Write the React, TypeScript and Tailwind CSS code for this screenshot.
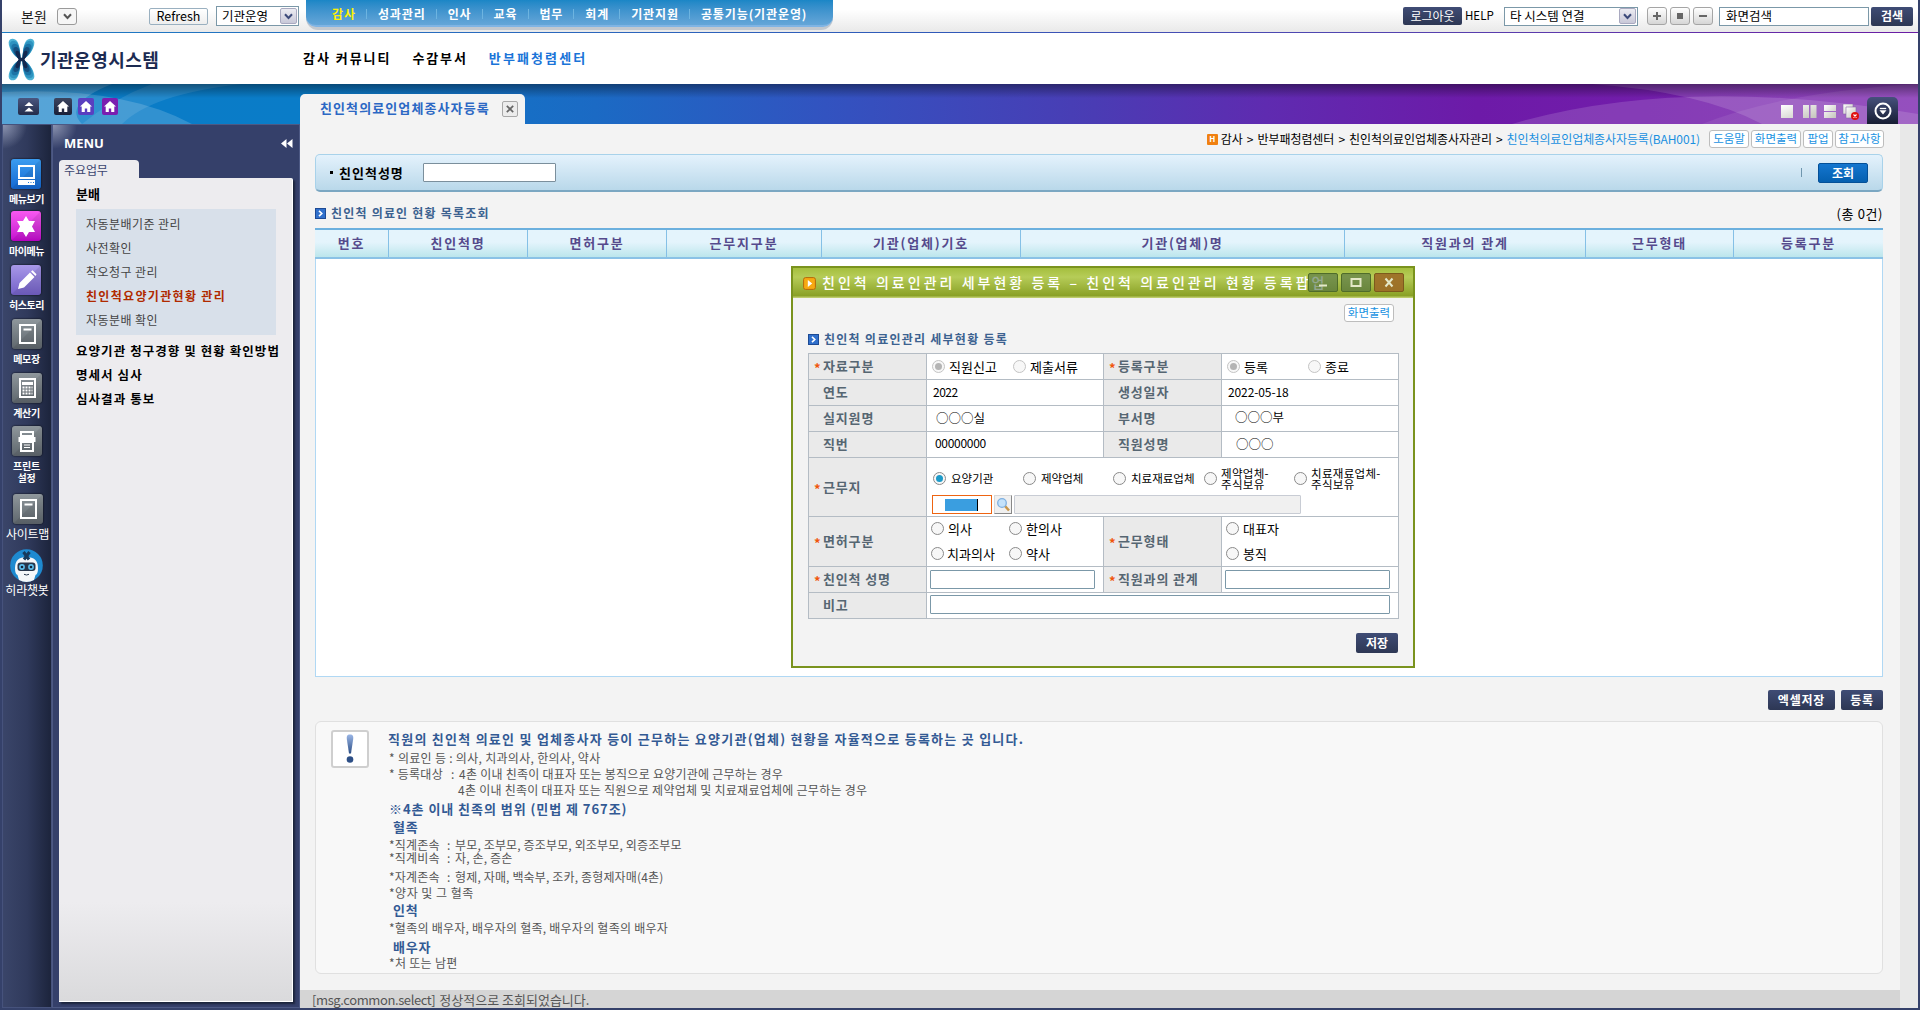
import React from 'react';

const cx = (...c: (string | false | undefined)[]) => c.filter(Boolean).join(' ');

/* ---------- small shared controls ---------- */

function Chevron({ color = '#3c4a7a' }: { color?: string }) {
  return (
    <svg width="9" height="7" viewBox="0 0 9 7" fill="none">
      <path d="M1 1.2 4.5 5 8 1.2" stroke={color} strokeWidth="2" />
    </svg>
  );
}

function SelectBox({ label, className }: { label: string; className: string }) {
  return (
    <div className={cx('flex items-center border border-[#7b98a8] bg-white pl-[5px] pr-px text-[12.5px] text-black', className)}>
      <span className="flex-1">{label}</span>
      <span className="flex h-4 w-[17px] items-center justify-center rounded-[2px] border border-[#a9a9c0] bg-gradient-to-b from-[#ececf2] to-[#c8c8d8]">
        <Chevron />
      </span>
    </div>
  );
}

function NavyButton({ children, className }: { children: React.ReactNode; className: string }) {
  return (
    <button className={cx('flex items-center justify-center rounded-[2px] bg-gradient-to-b from-[#3f4c75] to-[#2d3754] text-[12px] text-white', className)}>
      {children}
    </button>
  );
}

function LinkButton({ children, className }: { children: React.ReactNode; className: string }) {
  return (
    <button className={cx('flex h-[18px] items-center justify-center rounded-[3px] border border-[#bdbdbd] bg-white text-[11.5px] text-[#1a93e2]', className)}>
      {children}
    </button>
  );
}

function Radio({ state = 'off' }: { state?: 'off' | 'on' | 'disabled' | 'disabledOn' }) {
  return (
    <span
      className={cx(
        'flex size-[13px] shrink-0 items-center justify-center rounded-full border bg-[#f7f7f7]',
        state.startsWith('disabled') ? 'border-[#c4c4c4]' : 'border-[#8a8a8a]',
      )}
    >
      {state === 'on' && <span className="size-[7px] rounded-full bg-[#1d9ac8]" />}
      {state === 'disabledOn' && <span className="size-[7px] rounded-full bg-[#b4b4b4]" />}
    </span>
  );
}

function RadioItem({ label, state, className, gap = 'gap-[4px]' }: { label: React.ReactNode; state?: 'off' | 'on' | 'disabled' | 'disabledOn'; className?: string; gap?: string }) {
  return (
    <label className={cx('flex items-center', gap, className)}>
      <Radio state={state} />
      <span>{label}</span>
    </label>
  );
}

function SectionIcon() {
  return (
    <svg width="11" height="11" viewBox="0 0 11 11">
      <rect x=".5" y=".5" width="10" height="10" fill="#3070cc" stroke="#1d4a94" />
      <path d="M4 2.8 6.8 5.5 4 8.2" fill="none" stroke="#fff" strokeWidth="1.6" />
    </svg>
  );
}

/* ---------- top bar ---------- */

const navItems = ['감사', '성과관리', '인사', '교육', '법무', '회계', '기관지원', '공통기능(기관운영)'];

function TopBar() {
  return (
    <div className="flex h-8 bg-gradient-to-b from-white from-30% to-[#e9e9e9]">
      <div className="flex h-8 w-[304px] items-center">
        <span className="ml-[19px] w-[36px] text-[14px] text-[#222]">본원</span>
        <span className="flex h-[17px] w-[20px] items-center justify-center rounded-[3px] border border-[#9a9a9a] bg-[#f6f6f6]">
          <Chevron color="#555" />
        </span>
        <button className="ml-[72px] flex h-[17px] w-[59px] items-center justify-center rounded-[2px] border border-[#9ab0c0] bg-gradient-to-b from-white to-[#eee] text-[12.5px]">
          Refresh
        </button>
        <SelectBox label="기관운영" className="ml-[8px] h-[20px] w-[83px]" />
      </div>
      <nav className="h-[30px] w-[527px] rounded-b-[12px] bg-[#c2c8cf] pb-[3px]">
        <div className="flex h-[27px] items-center rounded-b-[10px] border-b-2 border-[#7fb4e4] bg-gradient-to-b from-[#1a86c6] to-[#64a6d8] pl-[26px] pt-[3px] text-[12px] font-bold tracking-[0.9px] text-white">
          {navItems.map((n, i) => (
            <React.Fragment key={n}>
              {i > 0 && <span className="ml-[10.2px] mr-[10.8px] h-[10px] w-px bg-[#6db4e0]" />}
              <span className={i === 0 ? 'text-[#fff200]' : ''}>{n}</span>
            </React.Fragment>
          ))}
        </div>
      </nav>
      <div className="flex flex-1 items-center justify-end pr-[5px]">
        <NavyButton className="h-[18px] w-[59px]">로그아웃</NavyButton>
        <span className="ml-[3px] w-[39px] text-[11.5px] text-black">HELP</span>
        <SelectBox label="타 시스템 연결" className="h-[19px] w-[134px]" />
        <div className="ml-[9px] flex gap-[3px]">
          {['plus', 'square', 'minus'].map((k) => (
            <span key={k} className="flex h-[18px] w-[20px] items-center justify-center rounded-[3px] border border-[#a5a5a5] bg-gradient-to-b from-white to-[#d6d6d6]">
              <svg width="10" height="10" viewBox="0 0 10 10" fill="#666">
                {k === 'plus' && <path d="M4 1h2v3h3v2H6v3H4V6H1V4h3z" />}
                {k === 'square' && <path d="M2 2h6v6H2z" />}
                {k === 'minus' && <path d="M1 4h8v2H1z" />}
              </svg>
            </span>
          ))}
        </div>
        <div className="ml-[6px] flex h-[19px] w-[150px] items-center border border-[#7b98a8] bg-white pl-[6px] text-[12.5px]">화면검색</div>
        <NavyButton className="ml-[2px] h-[19px] w-[42px] font-bold">검색</NavyButton>
      </div>
    </div>
  );
}

const lobe = 'M0 0C-7-3-12.300-12-11.800-17.500C-11.300-21.800-5.500-22-3.200-18C-.6-13.500-.3-7 0 0z';

function Logo() {
  return (
    <svg width="27" height="43" viewBox="-13.5 -21.5 27 43">
      {[
        ['#4db2d4', 1],
        ['#2e93c0', 0.9],
        ['#1c74a6', 0.76],
        ['#17507f', 0.6],
        ['#13284f', 0.42],
      ].map(([fill, s]) => (
        <g key={fill} fill={fill as string}>
          {[
            [1, 1],
            [-1, 1],
            [1, -1],
            [-1, -1],
          ].map(([a, b]) => (
            <path key={`${a}${b}`} d={lobe} transform={`translate(${-a} 0) scale(${a * Number(s)} ${b * Number(s)})`} />
          ))}
        </g>
      ))}
      <path d="M-4.500-3Q0-.5 4.500-3L3 0 4.500 3Q0 .5-4.500 3L-3 0z" fill="#13284f" />
    </svg>
  );
}

function Header() {
  return (
    <div className="flex h-[51px] items-center bg-white">
      <div className="ml-[6px] flex w-[295px] items-center gap-[5px] pt-px">
        <Logo />
        <span className="text-[18px] font-bold tracking-[0.5px] text-[#1c2b52]">기관운영시스템</span>
      </div>
      <div className="flex items-center gap-[21px] pb-[3px] text-[13px] font-bold text-black">
        <span className="tracking-[1.95px]">감사 커뮤니티</span>
        <span className="tracking-[1.9px]">수감부서</span>
        <span className="tracking-[2.1px] text-[#1a74d8]">반부패청렴센터</span>
      </div>
    </div>
  );
}

function HomeButton({ className }: { className: string }) {
  return (
    <span className={cx('flex h-[17px] items-center justify-center rounded-[2px]', className)}>
      <svg width="12" height="11" viewBox="0 0 12 11" fill="#fff">
        <path d="M6 0 12 5.500H10.300V11H7.200V7.500H4.800V11H1.700V5.500H0z" />
      </svg>
    </span>
  );
}

function Band() {
  return (
    <div className="relative flex h-10 bg-[linear-gradient(90deg,#0a7cc6_0%,#0a7cc8_16%,#1b6ac4_31%,#3253c0_43%,#4a3cb4_57%,#5f2bb0_66%,#6d1aa8_77%,#7a22ae_100%)]">
      <svg className="absolute inset-0" width="1916" height="40" viewBox="0 0 1916 40">
        <path d="M0 8Q120 2 190 40H0z" fill="#fff" opacity=".16" />
        <path d="M0 0V40H80Q60 20 110 0z" fill="#fff" opacity=".18" />
        <path d="M120 40Q150 10 240 0H150Q110 15 80 40z" fill="#fff" opacity=".1" />
        <path d="M1510 40Q1680 -10 1916 30V40z" fill="#fff" opacity=".14" />
        <path d="M1590 0Q1700 8 1760 40H1916V0z" fill="#fff" opacity=".14" />
        <path d="M1700 40Q1780 8 1916 0V40z" fill="#fff" opacity=".08" />
      </svg>
      <div className="absolute inset-x-0 top-0 h-[14px] bg-gradient-to-b from-black/40 to-transparent" />
      <div className="relative flex w-[298px] pl-4 pt-[14px]">
        <span className="flex h-[17px] w-[21px] items-center justify-center rounded-[2px] bg-gradient-to-b from-[#4a5680] to-[#232c4a]">
          <svg width="10" height="10" viewBox="0 0 10 10" fill="#fff">
            <path d="M5 0 9.500 4H.5zM5 5.500 9.500 9.500H.5z" />
          </svg>
        </span>
        <HomeButton className="ml-[15px] w-[18px] bg-gradient-to-b from-[#3c4560] to-[#1a2038]" />
        <HomeButton className="ml-[6px] w-[16px] bg-[#5a3fc0]" />
        <HomeButton className="ml-[8px] w-[16px] bg-[#7a1fb0]" />
      </div>
      <div className="relative mt-[10px] flex h-[30px] w-[225px] items-center rounded-t-[5px] bg-[#f3f3f3] pl-[20px]">
        <span className="w-[182px] pb-[3px] text-[13px] font-bold tracking-[1.1px] text-[#2c68c4]">친인척의료인업체종사자등록</span>
        <span className="flex size-4 items-center justify-center rounded-[2px] border border-[#a8a8a8] bg-[#ececec]">
          <svg width="8" height="8" viewBox="0 0 8 8">
            <path d="M.8.8 7.200 7.200M7.200.8.8 7.200" stroke="#666" strokeWidth="1.700" />
          </svg>
        </span>
      </div>
      <div className="relative ml-auto mr-[20px] flex items-end">
        <svg className="mb-[4px] mr-[7px]" width="80" height="16" viewBox="0 0 80 16">
          <defs>
            <linearGradient id="pane" x1="0" y1="0" x2="1" y2="1">
              <stop offset="0" stopColor="#fff" />
              <stop offset="1" stopColor="#c4c4bc" />
            </linearGradient>
          </defs>
          <g fill="url(#pane)">
            <path d="M1 1h12v13H1zM23 1h6v13h-6zM30.500 1h6v13h-6z" />
            <path d="M44 1h12v6H44zM44 8h12v6H44z" />
            <path d="M63 0h10v10H63z" stroke="#8a6aa8" strokeWidth=".6" />
            <path d="M66 3h10v11H66z" stroke="#8a6aa8" strokeWidth=".6" />
          </g>
          <circle cx="75" cy="12" r="4" fill="#e01010" />
          <path d="m73.500 10.500 3 3m0-3-3 3" stroke="#fff" strokeWidth="1.100" />
        </svg>
        <span className="flex h-[27px] w-[31px] items-center justify-center rounded-t-[5px] bg-gradient-to-b from-[#46517c] to-[#171e34]">
          <svg width="18" height="18" viewBox="0 0 18 18" fill="none">
            <circle cx="9" cy="9" r="7.500" stroke="#fff" strokeWidth="2" />
            <path d="M5.800 6.500h6.400" stroke="#fff" strokeWidth="1.300" />
            <path d="M5.500 8.300h7L9 12.500z" fill="#fff" />
          </svg>
        </span>
      </div>
    </div>
  );
}

/* ---------- left rail ---------- */

const gray = 'bg-gradient-to-b from-[#8f979c] to-[#5f676d]';

function RailIcon({ kind }: { kind: string }) {
  return (
    <svg width="30" height="30" viewBox="0 0 30 30" fill="none" stroke="#fff" strokeWidth="2">
      <path d="M30 0V30H0z" fill="#000" opacity=".08" stroke="none" />
      {kind === 'pc' && (
        <>
          <path d="M8 7h15v12H8z" />
          <path d="M7 21h17v5H7z" fill="#fff" stroke="none" />
          <path d="M17 23.500h1m1.500 0h1m1.500 0h1" stroke="#1a78d8" strokeWidth="1.200" />
        </>
      )}
      {kind === 'star' && <path d="m15 5 3 5h6l-3 5.500L24 21h-6l-3 5-3-5H6l3-5.500L6 10h6z" fill="#fff" stroke="none" />}
      {kind === 'pencil' && (
        <path d="m7 24 1.500-6L19 7.500l4.500 4.500L13 22.500zM20 6.500l1.500-1.300 4 4L24.500 11z" fill="#fff" stroke="none" />
      )}
      {kind === 'memo' && (
        <>
          <path d="M8 6h15v18H8z" />
          <path d="M11.500 10.500h8" />
        </>
      )}
      {kind === 'calc' && (
        <>
          <path d="M8 6h15v18H8z" />
          <path d="M10 9h11v3H10z" fill="#fff" stroke="none" />
          <path d="M10.500 14.500h10M10.500 17.500h10M10.500 20.500h10" strokeDasharray="2 1" />
        </>
      )}
      {kind === 'print' && (
        <>
          <path d="M9 6h12v4H9zM9 16h12v9H9z" />
          <path d="M6.500 11h17v5h-17z" fill="#fff" stroke="none" />
          <path d="M12 19h6M12 21.500h6" strokeWidth="1" />
        </>
      )}
    </svg>
  );
}

function Robot() {
  return (
    <svg className="shrink-0" width="33" height="33" viewBox="0 0 33 33">
      <circle cx="16.500" cy="16.500" r="16.300" fill="#1e8ad0" />
      <path d="M5 19Q5 8 16.500 8T28 19Q28 25 25.500 26L24 31Q16.500 35 9 31L7.500 26Q5 25 5 19z" fill="#f5f7f9" />
      <path d="M13.500 3 19 10.500M19.500 3 14 10.500" stroke="#173a5c" strokeWidth="3" />
      <rect x="7.500" y="13.500" width="18" height="8.500" rx="3" fill="#28374c" />
      <circle cx="12" cy="18" r="2.900" fill="#5ec0ee" />
      <circle cx="21" cy="18" r="2.900" fill="#5ec0ee" />
      <circle cx="12" cy="18" r="1.300" fill="#12243a" />
      <circle cx="21" cy="18" r="1.300" fill="#12243a" />
      <path d="M14 25.300q2.500 1.400 5 0" stroke="#28374c" fill="none" />
    </svg>
  );
}

const rail = [
  { kind: 'pc', label: '메뉴보기', bg: 'bg-gradient-to-b from-[#3b9cf0] to-[#1468d2]', h: 'h-[52px]' },
  { kind: 'star', label: '마이메뉴', bg: 'bg-gradient-to-b from-[#f858f0] to-[#c400d0]', h: 'h-[54px]' },
  { kind: 'pencil', label: '히스토리', bg: 'bg-gradient-to-b from-[#a898e8] to-[#7460c8]', h: 'h-[54px]' },
  { kind: 'memo', label: '메모장', bg: gray, h: 'h-[54px]' },
  { kind: 'calc', label: '계산기', bg: gray, h: 'h-[53px]' },
];

function Tile({ kind, bg }: { kind: string; bg: string }) {
  return (
    <span className={cx('size-[30px] shrink-0 overflow-hidden rounded-[3px] shadow-[0_0_2px_#000]', bg)}>
      <RailIcon kind={kind} />
    </span>
  );
}

function Rail() {
  return (
    <div className="flex w-[50px] shrink-0 flex-col items-center border border-[#46527c] bg-[radial-gradient(circle_at_0_0,#8c94b0_0,transparent_24px),linear-gradient(90deg,#3a4569,#303a5c_50%,#1c243c)] pr-px pt-[34px] text-white">
      {rail.map((r) => (
        <div key={r.kind} className={cx('flex shrink-0 flex-col items-center', r.h)}>
          <Tile kind={r.kind} bg={r.bg} />
          <span className="mt-[4px] h-3 whitespace-nowrap text-[10px] font-bold leading-3 tracking-[-0.4px]">{r.label}</span>
        </div>
      ))}
      <div className="flex h-[68px] shrink-0 flex-col items-center">
        <Tile kind="print" bg={gray} />
        <span className="mt-[4px] text-center text-[10px] font-bold leading-3 tracking-[-0.2px]">
          프린트
          <br />
          설정
        </span>
      </div>
      <div className="ml-[2px] flex h-[55px] shrink-0 flex-col items-center">
        <Tile kind="memo" bg={gray} />
        <span className="mt-[3px] whitespace-nowrap text-[12px] leading-[14px] tracking-[-0.3px]">사이트맵</span>
      </div>
      <Robot />
      <span className="ml-px whitespace-nowrap text-[12px] leading-[16px] tracking-[-0.2px]">히라챗봇</span>
    </div>
  );
}

const subMenu = ['자동분배기준 관리', '사전확인', '착오청구 관리', '친인척요양기관현황 관리', '자동분배 확인'];

function Menu() {
  return (
    <div className="flex w-[248px] shrink-0 flex-col border border-[#4d5984] bg-[#35406a] bg-[radial-gradient(circle_at_0_0,#8c94b0_0,#35406a_24px)] pb-[5px] pl-[6px] pr-[7px]">
      <div className="flex h-[35px] items-center justify-between pl-[5px] pt-[2px]">
        <span className="font-['Open_Sans'] text-[13px] font-bold text-white">MENU</span>
        <svg className="-mr-px" width="12" height="9" viewBox="0 0 12 9" fill="#fff">
          <path d="M5.500 0v9L0 4.500zM11.500 0v9L6 4.500z" />
        </svg>
      </div>
      <div className="flex h-[18px] w-[80px] items-center rounded-t-[4px] bg-[#edecef] pl-[5px] pt-[2px] text-[12px] tracking-[-0.1px] text-[#3c4670]">주요업무</div>
      <div className="w-[234px] flex-1 rounded-tr-[2px] border-b border-r border-white bg-[linear-gradient(#edecef_0%,#edecef_88%,#dadadc_100%)] pl-[17px] pt-[5px] shadow-[2px_2px_2px_#1c243c]">
        <div className="flex h-[20px] items-center text-[13px] font-bold text-black">분배</div>
        <div className="mt-[6px] flex h-[126px] w-[200px] flex-col justify-center bg-[#d8e0ea] pl-[11px]">
          {subMenu.map((s, i) => (
            <div
              key={s}
              className={cx('-ml-px flex h-6 items-center whitespace-nowrap text-[12px]', i === 3 ? 'font-bold tracking-[1.32px] text-[#b02a00]' : 'tracking-[0.45px] text-[#444]')}
            >
              {s}
            </div>
          ))}
        </div>
        <div className="mt-[4px] whitespace-nowrap text-[12.5px] font-bold tracking-[1.06px] text-black">
          <div className="flex h-6 items-center">요양기관 청구경향 및 현황 확인방법</div>
          <div className="flex h-6 items-center">명세서 심사</div>
          <div className="flex h-6 items-center">심사결과 통보</div>
        </div>
      </div>
    </div>
  );
}

/* ---------- popup ---------- */

function Label({ children, required }: { children: React.ReactNode; required?: boolean }) {
  return (
    <div className="flex items-center bg-[#eaeaea] pb-[2px] pl-[5px] text-[13px] font-bold tracking-[0.85px] text-[#566672]">
      <span className="w-[9px] pt-[4px] text-[13px] leading-none text-[#f0560a]">{required && '*'}</span>
      {children}
    </div>
  );
}

const field = 'h-[19px] rounded-[1px] border border-[#7b98a8] bg-white';

function Popup() {
  return (
    <div className="absolute left-[475px] top-[7px] flex h-[402px] w-[624px] flex-col border-2 border-[#7a931e] bg-[#f3f3f3]">
      <div className="relative flex h-[30px] items-center bg-[linear-gradient(#a5bf3e,#b6cc58_30%,#8aa126_92%,#c9d67c)] pl-[10px]">
        <svg width="13" height="13" viewBox="0 0 13 13">
          <rect x=".6" y=".6" width="11.800" height="11.800" rx="2" fill="#f7a912" stroke="#b4680a" />
          <path d="M4.800 3 9.200 6.500 4.800 10z" fill="#fff" />
        </svg>
        <span className="ml-[6px] whitespace-nowrap pb-[2px] text-[14px] font-medium tracking-[3.03px] text-white">
          친인척 의료인관리 세부현황 등록 – 친인척 의료인관리 현황 등록팝업
        </span>
        <div className="absolute right-[9px] top-[5px] flex gap-[3px]">
          {['min', 'max', 'close'].map((k) => (
            <span
              key={k}
              className={cx(
                'flex h-[19px] w-[30px] items-center justify-center rounded-[2px] border',
                k === 'close' ? 'border-[#7c5a1c] bg-[#9c6a26]/90' : 'border-[#4f6c2a] bg-[#4d6c44]/60',
              )}
            >
              <svg width="12" height="11" viewBox="0 0 12 11" fill="none" stroke="#e4e8c8">
                {k === 'min' && <path d="M2 8.500h8" strokeWidth="2" />}
                {k === 'max' && <path d="M1.500 2h9v7h-9z" strokeWidth="2" />}
                {k === 'close' && <path d="m2.500 1.500 7 8m0-8-7 8" strokeWidth="2" />}
              </svg>
            </span>
          ))}
        </div>
      </div>
      <div className="mt-[6px] flex h-[18px] justify-end pr-[19px]">
        <LinkButton className="w-[50px]">화면출력</LinkButton>
      </div>
      <div className="mt-[10px] flex h-[14px] items-center gap-[5px] pl-[15px]">
        <SectionIcon />
        <span className="text-[12px] font-bold tracking-[1.25px] text-[#3c6290]">친인척 의료인관리 세부현황 등록</span>
      </div>
      <div className="ml-[15px] mt-[7px] grid w-[591px] grid-cols-[117px_176px_117px_176px] grid-rows-[25px_25px_25px_25px_58px_49px_25px_25px] gap-px bg-[#b4bcc4] p-px text-[12px] text-black [&>*]:min-w-0">
        <Label required>자료구분</Label>
        <div className="flex items-center bg-white pl-[5px] text-[13px]">
          <RadioItem label="직원신고" state="disabledOn" className="w-[81px]" />
          <RadioItem label="제출서류" state="disabled" />
        </div>
        <Label required>등록구분</Label>
        <div className="flex items-center bg-white pl-[5px] text-[13px]">
          <RadioItem label="등록" state="disabledOn" className="w-[81px]" />
          <RadioItem label="종료" state="disabled" />
        </div>

        <Label>연도</Label>
        <div className="flex items-center bg-white pb-px pl-[6px] tracking-[-0.5px]">2022</div>
        <Label>생성일자</Label>
        <div className="flex items-center bg-white pb-px pl-[6px] tracking-[-0.1px]">2022-05-18</div>

        <Label>실지원명</Label>
        <div className="flex items-center bg-white pl-[9px] text-[12.5px]">○○○실</div>
        <Label>부서명</Label>
        <div className="flex items-center bg-white pb-[2px] pl-[13px] text-[12.5px]">○○○부</div>

        <Label>직번</Label>
        <div className="flex items-center bg-white pb-[3px] pl-[8px] tracking-[-0.3px]">00000000</div>
        <Label>직원성명</Label>
        <div className="flex items-center bg-white pl-[14px] text-[12.5px]">○○○</div>

        <Label required>근무지</Label>
        <div className="col-span-3 flex flex-col bg-white pl-[6px]">
          <div className="flex h-[37px] items-center pt-[4px] text-[11.5px] leading-[11px]">
            <RadioItem label="요양기관" state="on" className="w-[90px]" gap="gap-[5px]" />
            <RadioItem label="제약업체" className="w-[90px]" gap="gap-[5px]" />
            <RadioItem label="치료재료업체" className="w-[91px]" gap="gap-[5px]" />
            <RadioItem label={<>제약업체-<br />주식보유</>} className="w-[90px] tracking-[0.3px]" gap="gap-[4px]" />
            <RadioItem label={<>치료재료업체-<br />주식보유</>} className="tracking-[0.3px]" gap="gap-[4px]" />
          </div>
          <div className="-ml-px flex items-center">
            <div className="flex h-[19px] w-[60px] items-center border-[1.5px] border-[#ee6412] bg-white pl-[12px]">
              <span className="h-[12px] w-[33px] border-r border-black bg-[#3a9ee0]" />
            </div>
            <span className="ml-[2px] flex h-[19px] w-[18px] items-center justify-center border border-[#d8d8d8] border-b-[#888] border-r-[#888] bg-[#f0f0f0]">
              <svg width="15" height="15" viewBox="0 0 15 15">
                <path d="m9 9 4 4.500" stroke="#c8964a" strokeWidth="2.500" />
                <circle cx="6" cy="6" r="4.300" fill="#c4e2fa" stroke="#7fb0e0" strokeWidth="1.300" />
              </svg>
            </span>
            <div className="ml-[2px] h-[19px] w-[287px] rounded-[1px] border border-[#c8ccd4] bg-[#f0f0f0]" />
          </div>
        </div>

        <Label required>면허구분</Label>
        <div className="grid grid-cols-[78px_1fr] grid-rows-[24px_25px] bg-white pl-[4px] text-[13px]">
          <RadioItem label="의사" className="pb-px" />
          <RadioItem label="한의사" className="pb-px" />
          <RadioItem label="치과의사" gap="gap-[3px]" />
          <RadioItem label="약사" />
        </div>
        <Label required>근무형태</Label>
        <div className="grid grid-rows-[24px_25px] bg-white pl-[4px] text-[13px]">
          <RadioItem label="대표자" className="pb-px" />
          <RadioItem label="봉직" />
        </div>

        <Label required>친인척 성명</Label>
        <div className="flex items-center bg-white pl-[3px]">
          <div className={cx(field, 'w-[165px]')} />
        </div>
        <Label required>직원과의 관계</Label>
        <div className="flex items-center bg-white pl-[3px]">
          <div className={cx(field, 'w-[165px]')} />
        </div>

        <Label>비고</Label>
        <div className="col-span-3 flex items-center bg-white pb-[2px] pl-[3px]">
          <div className={cx(field, 'w-[460px]')} />
        </div>
      </div>
      <div className="mt-[14px] flex justify-end pr-[15px]">
        <NavyButton className="h-5 w-[42px] font-bold">저장</NavyButton>
      </div>
    </div>
  );
}

/* ---------- main content ---------- */

const columns = ['번호', '친인척명', '면허구분', '근무지구분', '기관(업체)기호', '기관(업체)명', '직원과의 관계', '근무형태', '등록구분'];

const heading = 'text-[13px] font-bold text-[#335a94]';

function Relation({ name, list, className }: { name: string; list: string; className: string }) {
  return (
    <div className={cx('flex', className)}>
      <span className="w-[58px] tracking-[0.2px]">{name}</span>
      <span className="w-[8px]">:</span>
      <span className="tracking-[0.15px]">{list}</span>
    </div>
  );
}

function Info() {
  return (
    <div className="mt-[11px] flex h-[253px] rounded-[6px] border border-[#e0e0e0] bg-[#f8f8f8] pl-[15px]">
      <div className="mt-[8px] flex size-[38px] shrink-0 items-center justify-center rounded-[3px] border-2 border-[#cfcfcf] bg-white">
        <svg width="10" height="30" viewBox="0 0 10 30">
          <defs>
            <linearGradient id="ex" x1="0" y1="0" x2="0" y2="1">
              <stop offset="0" stopColor="#9ab6e6" />
              <stop offset="1" stopColor="#2d4f86" />
            </linearGradient>
          </defs>
          <path d="M5 .5C8 .5 8.500 2.500 8.200 5L6 19.500H4L1.800 5C1.500 2.500 2 .5 5 .5z" fill="url(#ex)" />
          <circle cx="5" cy="25.500" r="3.300" fill="#2d4f86" />
        </svg>
      </div>
      <div className="ml-[20px] whitespace-pre pt-[10px] text-[12px] leading-[14px] text-[#555]">
        <div className={cx(heading, '-ml-px tracking-[1.25px]')}>직원의 친인척 의료인 및 업체종사자 등이 근무하는 요양기관(업체) 현황을 자율적으로 등록하는 곳 입니다.</div>
        <div className="mt-[5px] tracking-[0.3px]">* 의료인 등 : 의사, 치과의사, 한의사, 약사</div>
        <div className="mt-[2px] flex tracking-[0.25px]">
          <span className="w-[62px]">* 등록대상</span>
          <span className="w-[8px]">:</span>
          <span>4촌 이내 친족이 대표자 또는 봉직으로 요양기관에 근무하는 경우</span>
        </div>
        <div className="mt-[2px] pl-[69px] tracking-[0.26px]">4촌 이내 친족이 대표자 또는 직원으로 제약업체 및 치료재료업체에 근무하는 경우</div>
        <div className={cx(heading, 'mt-[5px] tracking-[0.95px]')}>※4촌 이내 친족의 범위 (민법 제 767조)</div>
        <div className={cx(heading, 'mt-[4px] pl-[4px] tracking-[0.8px]')}>혈족</div>
        <Relation className="mt-[4px]" name="*직계존속" list="부모, 조부모, 증조부모, 외조부모, 외증조부모" />
        <Relation className="-mt-px" name="*직계비속" list="자, 손, 증손" />
        <Relation className="mt-[5px]" name="*자계존속" list="형제, 자매, 백숙부, 조카, 종형제자매(4촌)" />
        <div className="mt-[2px] tracking-[0.5px]">*양자 및 그 혈족</div>
        <div className={cx(heading, 'mt-[3px] pl-[4px] tracking-[0.8px]')}>인척</div>
        <div className="mt-[4px] tracking-[0.25px]">*혈족의 배우자, 배우자의 혈족, 배우자의 혈족의 배우자</div>
        <div className={cx(heading, 'mt-[5px] pl-[4px] tracking-[0.8px]')}>배우자</div>
        <div className="mt-[2px] tracking-[0.3px]">*처 또는 남편</div>
      </div>
    </div>
  );
}

function Content() {
  return (
    <div className="flex w-[1600px] shrink-0 flex-col bg-[#f3f3f3]">
      <div className="flex h-[30px] items-center justify-end pr-[16px] text-[12px] text-black">
        <span className="mr-[3px] flex h-[11px] w-[11px] items-center justify-center rounded-[1px] bg-[#f08010] text-[8px] font-bold leading-none text-white">H</span>
        <span className="mr-[4px] tracking-[-0.05px] [word-spacing:1.4px]">감사 &gt; 반부패청렴센터 &gt; 친인척의료인업체종사자관리 &gt;</span>
        <span className="tracking-[-0.1px] text-[#1a90e0]">친인척의료인업체종사자등록(BAH001)</span>
        <LinkButton className="ml-[9px] w-[40px]">도움말</LinkButton>
        <LinkButton className="ml-[2px] w-[50px]">화면출력</LinkButton>
        <LinkButton className="ml-[2px] w-[30px]">팝업</LinkButton>
        <LinkButton className="ml-[2px] w-[49px]">참고사항</LinkButton>
      </div>
      <div className="ml-[15px] w-[1568px]">
        <div className="flex h-[38px] items-center rounded-[5px] border border-b-2 border-[#a8d2ea] border-b-[#7ba7c2] bg-gradient-to-b from-[#e4f2fc] to-[#b9d8ea] pl-[14px] pr-[14px]">
          <span className="mr-[6px] size-[3px] bg-black" />
          <span className="w-[84px] text-[13px] font-bold tracking-[1px] text-black">친인척성명</span>
          <div className="h-[19px] w-[133px] rounded-[1px] border border-[#7b8f9c] bg-white" />
          <span className="ml-auto h-[9px] w-px bg-[#6f96ae]" />
          <button className="ml-[16px] h-[20px] w-[50px] rounded-[2px] border border-[#045098] bg-gradient-to-b from-[#1476cf] to-[#0560b0] text-[12px] font-bold leading-none text-white">
            조회
          </button>
        </div>
        <div className="flex h-[36px] items-center pt-[6px]">
          <SectionIcon />
          <span className="ml-[5px] text-[12px] font-bold tracking-[1.2px] text-[#3c6290]">친인척 의료인 현황 목록조회</span>
          <span className="ml-auto pt-px text-[13px] tracking-[0.6px] text-black">(총 0건)</span>
        </div>
        <div className="grid h-[31px] grid-cols-[73px_139px_139px_155px_199px_324px_241px_148px_150px] border-b-2 border-t-2 border-b-[#8bc2e6] border-t-[#6cb0de] bg-gradient-to-b from-[#e4f4fc] from-45% to-[#bce6ec] text-[13px] font-bold tracking-[1.8px] text-[#554a8c]">
          {columns.map((c, i) => (
            <div key={c} className={cx('flex items-center justify-center pb-[3px]', i > 0 && 'border-l border-[#85c0e6]')}>
              {c}
            </div>
          ))}
        </div>
        <div className="relative h-[418px] border border-t-0 border-[#b0d8f4] bg-white">
          <Popup />
        </div>
        <div className="mt-[13px] flex justify-end gap-[6px]">
          <NavyButton className="h-5 w-[67px] font-bold tracking-[0.8px]">엑셀저장</NavyButton>
          <NavyButton className="h-5 w-[42px] font-bold tracking-[0.8px]">등록</NavyButton>
        </div>
        <Info />
      </div>
      <div className="mt-auto flex h-[18px] items-center gap-[4px] bg-[#d5d5d5] pl-[12px] pt-px text-[13px] text-[#555]">
        <span className="tracking-[-0.4px]">[msg.common.select]</span>
        <span>정상적으로 조회되었습니다.</span>
      </div>
    </div>
  );
}

export default function App() {
  return (
    <div className="flex h-[1010px] w-[1920px] flex-col overflow-hidden border-x-2 border-b-2 border-[#35416a] bg-white font-['Noto_Sans_CJK_KR','Noto_Sans',sans-serif] leading-none">
      <TopBar />
      <div className="h-px bg-gradient-to-r from-[#1b7cc4] via-[#3058b8] to-[#6a1ca4]" />
      <Header />
      <Band />
      <div className="flex min-h-0 flex-1">
        <Rail />
        <Menu />
        <Content />
        <div className="flex-1 bg-[#e8e8e8]" />
      </div>
    </div>
  );
}
